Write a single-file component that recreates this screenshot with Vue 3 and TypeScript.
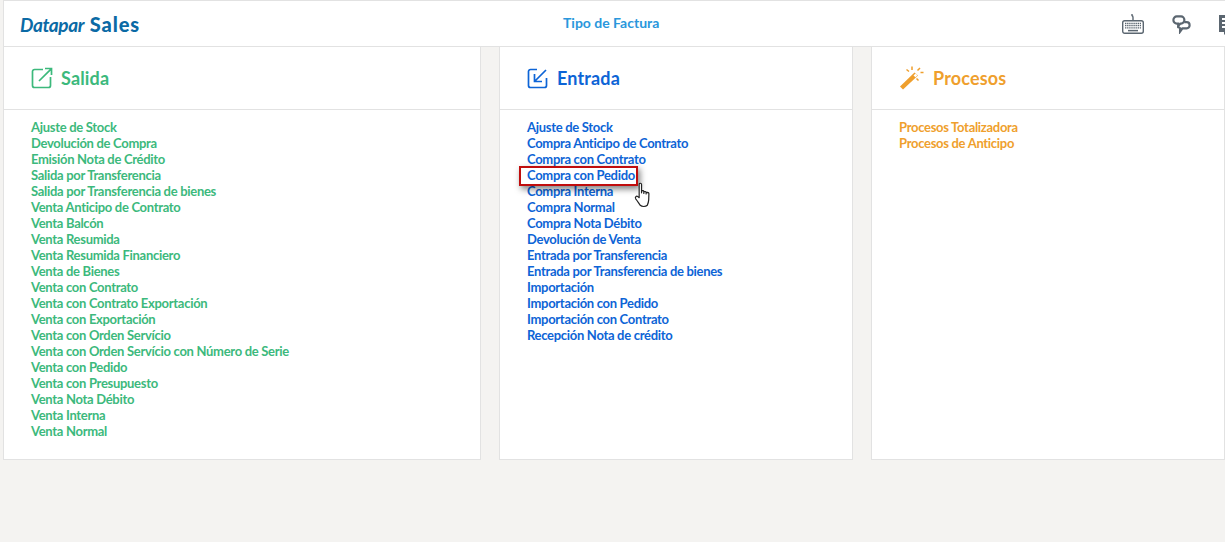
<script setup lang="ts">
const salida: string[] = ['Ajuste de Stock','Devolución de Compra','Emisión Nota de Crédito','Salida por Transferencia','Salida por Transferencia de bienes','Venta Anticipo de Contrato','Venta Balcón','Venta Resumida','Venta Resumida Financiero','Venta de Bienes','Venta con Contrato','Venta con Contrato Exportación','Venta con Exportación','Venta con Orden Servício','Venta con Orden Servício con Número de Serie','Venta con Pedido','Venta con Presupuesto','Venta Nota Débito','Venta Interna','Venta Normal']
const entrada: string[] = ['Ajuste de Stock','Compra Anticipo de Contrato','Compra con Contrato','Compra con Pedido','Compra Interna','Compra Normal','Compra Nota Débito','Devolución de Venta','Entrada por Transferencia','Entrada por Transferencia de bienes','Importación','Importación con Pedido','Importación con Contrato','Recepción Nota de crédito']
const procesos: string[] = ['Procesos Totalizadora','Procesos de Anticipo']
</script>

<template>
  <div class="page">
    <header class="topbar">
      <div class="logo"><em>Datapar</em> <strong>Sales</strong></div>
      <div class="title">Tipo de Factura</div>
      <div class="tools">
        <svg width="24" height="24" viewBox="0 0 24 24" fill="none" stroke="#5b6670" stroke-width="1.4">
          <rect x="1.700" y="8.700" width="20.600" height="12.600" rx="2" />
          <path d="M12 8.500V5.500Q12 4 11 3.500V2" />
          <path d="M4 11.500h16M4 13.700h16M4 15.900h16" stroke-dasharray="1.400 .7" stroke-width="1.300" />
          <path d="M7 18.600h10" stroke-width="1.500" />
        </svg>
        <svg class="chat" width="19" height="19" viewBox="0 0 20 20" fill="none" stroke="#5b6670" stroke-width="2.300">
          <path d="M5 1.500H9.500A3.500 3.500 0 0 1 13 5V5.500A3.500 3.500 0 0 1 9.500 9H9L6.500 11.500V9H5A3.500 3.500 0 0 1 1.500 5.500V5A3.500 3.500 0 0 1 5 1.500Z" />
          <path d="M13 7.500H15.500A3 3 0 0 1 18.500 10.500V11A3 3 0 0 1 15.500 14H11L8.500 17.500V14A3 3 0 0 1 6.500 11.500" />
        </svg>
        <svg width="20" height="22" viewBox="0 0 20 22">
          <path fill="#5b6670" d="M1 2h18v17H9l-3 3v-3H1Z" />
          <path fill="#fff" d="M4 5h12v2H4zM4 9h12v2H4zM4 13h8v2H4z" />
        </svg>
      </div>
    </header>

    <main class="cards">
      <section class="card salida">
        <h2 class="head">
          <svg width="22" height="22" viewBox="0 0 22 22" fill="none" stroke="currentColor" stroke-width="1.700">
            <path d="M12 2.500H3.500A2 2 0 0 0 1.500 4.500V18.500A2 2 0 0 0 3.500 20.500H17.500A2 2 0 0 0 19.500 18.500V10" />
            <path d="M8 14L20 2.200M14 1.500H20.500V8" />
          </svg>
          <span>Salida</span>
        </h2>
        <ul><li v-for="t in salida" :key="t">{{ t }}</li></ul>
      </section>

      <section class="card entrada">
        <h2 class="head">
          <svg width="22" height="22" viewBox="0 0 22 22" fill="none" stroke="currentColor" stroke-width="1.700">
            <path d="M10 2.500H3.500A2 2 0 0 0 1.500 4.500V18.500A2 2 0 0 0 3.500 20.500H17.500A2 2 0 0 0 19.500 18.500V11" />
            <path d="M19 3L8 14M7.500 7V14.500H15" />
          </svg>
          <span>Entrada</span>
        </h2>
        <ul>
          <li v-for="t in entrada" :key="t" :class="{ marked: t === 'Compra con Pedido' }">{{ t }}<svg v-if="t === 'Compra con Pedido'" class="cursor" width="19" height="26" viewBox="0 0 17 24">
            <path fill="#fff" stroke="#222" stroke-width="1.100" stroke-linejoin="round" d="M4.500 14.500V2.200C4.500.8 6.700.8 6.700 2.200V10V8.800C6.700 7.700 8.800 7.700 8.800 8.800V10.500V9.500C8.800 8.500 10.900 8.500 10.900 9.500V11V10.200C10.900 9.300 13.500 9.300 13.500 10.500L13.300 16.500C13.200 18.500 12.800 19.500 12 21.500C10.500 23 7 23 5.500 21.500C4.500 20.300 3 17.500 1.300 15.500C.3 14 2 12.500 3.300 13.500Z" />
          </svg></li>
        </ul>
      </section>

      <section class="card procesos">
        <h2 class="head">
          <svg width="26" height="24" viewBox="0 0 26 24" fill="currentColor">
            <path d="M1 20.500L15.500 6.500L19 9.500L4 23.500Z" />
            <path d="M14.500 9.500l2-2 2 1.800-2 2z" fill="#fff" />
            <path d="M7.500 3.500l2.500 2M13 0.500v3.500M21 2l-2.500 2.500M21.500 6.500h3M17.500 12.500l2 2" fill="none" stroke="currentColor" stroke-width="1.500" />
          </svg>
          <span>Procesos</span>
        </h2>
        <ul><li v-for="t in procesos" :key="t">{{ t }}</li></ul>
      </section>
    </main>
  </div>
</template>

<style>
html, body { margin: 0; background: #f4f3f1; overflow: hidden; }
</style>

<style scoped>
.page {
  width: 1225px;
  height: 542px;
  box-sizing: border-box;
  padding-left: 3px;
  overflow: hidden;
  font-family: Lato, sans-serif;
  background: #f4f3f1;
}
.topbar {
  height: 47px;
  width: 1222px;
  box-sizing: border-box;
  background: #fff;
  border-top: 1px solid #e2e2e2;
  border-bottom: 1px solid #e2e2e2;
  border-left: 1px solid #e2e2e2;
  display: grid;
  grid-template-columns: 1fr auto 1fr;
  align-items: center;
  position: relative;
}
.logo {
  padding-left: 16px;
  font-size: 19px;
  color: #0b6aa5;
  white-space: nowrap;
}
.logo em { font-weight: 700; font-style: italic; letter-spacing: -0.4px; }
.logo strong { font-weight: 900; font-size: 20px; letter-spacing: 0.9px; margin-left: 1px; }
.title {
  position: absolute;
  left: 559px;
  top: 13px;
  font-size: 14px;
  font-weight: 700;
  color: #2a97dc;
  white-space: nowrap;
}
.tools {
  grid-column: 3;
  justify-self: end;
  display: flex;
  align-items: center;
  gap: 27px;
  margin-right: -13px;
  height: 24px;
}
.chat { margin-top: 2px; }
.cards {
  display: grid;
  grid-template-columns: 478px 354px 354px;
  column-gap: 18px;
  height: 413px;
}
.card {
  background: #fff;
  border: 1px solid #e2e2e2;
  border-top: 0;
  box-sizing: border-box;
}
.head {
  margin: 0;
  height: 63px;
  box-sizing: border-box;
  border-bottom: 1px solid #e2e2e2;
  padding-left: 27px;
  display: flex;
  align-items: center;
  gap: 8px;
  font-size: 18px;
  font-weight: 700;
  letter-spacing: 0.15px;
}
ul {
  list-style: none;
  margin: 0;
  padding: 9px 0 0 27px;
}
li {
  font-size: 13px;
  line-height: 16px;
  font-weight: 700;
  letter-spacing: -0.3px;
  white-space: nowrap;
}
.salida { color: #3cb97c; }
.entrada { color: #0d64d6; }
.procesos { color: #ef9f2d; }
.marked { position: relative; }
.marked::before {
  content: "";
  position: absolute;
  left: -8px;
  top: -1px;
  width: 115px;
  height: 16px;
  border: 2px solid #c00d0d;
  box-shadow: 2px 3px 6px rgba(0, 0, 0, .5);
}
.cursor {
  position: absolute;
  left: 107px;
  top: 15px;
  z-index: 2;
}
</style>
